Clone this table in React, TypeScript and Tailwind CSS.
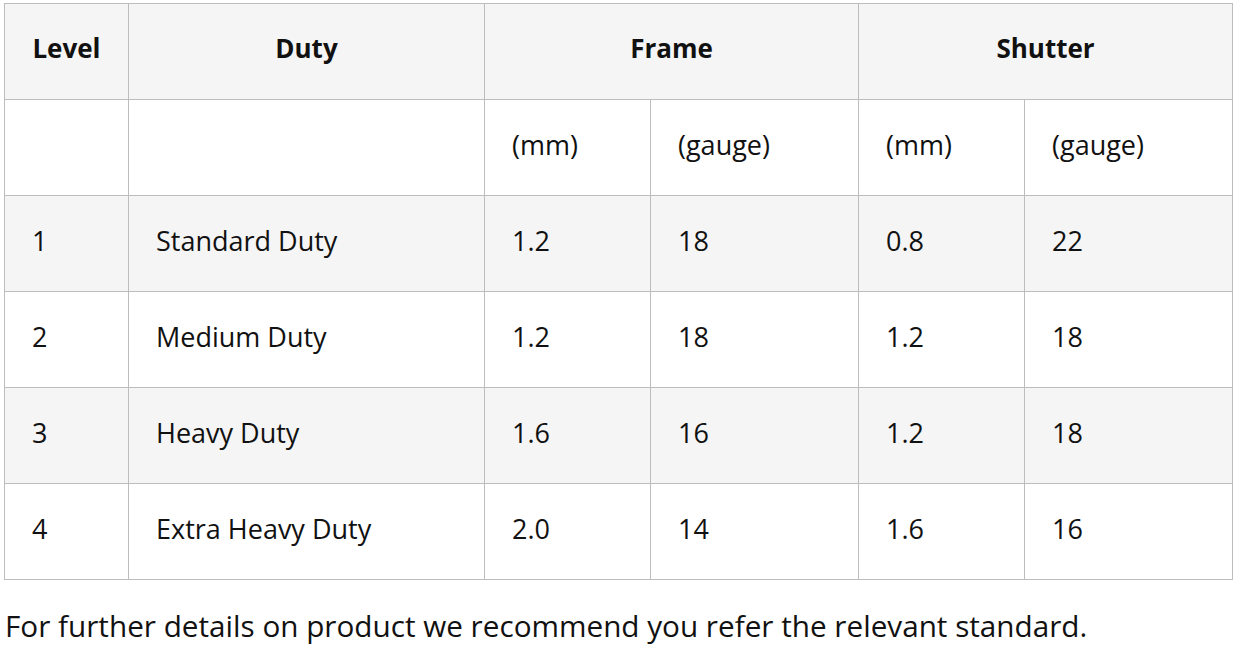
import React from 'react';

const rows = [
  ['1', 'Standard Duty', '1.2', '18', '0.8', '22'],
  ['2', 'Medium Duty', '1.2', '18', '1.2', '18'],
  ['3', 'Heavy Duty', '1.6', '16', '1.2', '18'],
  ['4', 'Extra Heavy Duty', '2.0', '14', '1.6', '16'],
];

const cell = 'border border-[#bdbdbd] px-[27px] pb-[6px] text-left align-middle';
const head = 'border border-[#bdbdbd] pb-[8px] font-bold text-center text-[26px]';

export default function App() {
  return (
    <div
      className="bg-white text-[#111111] pl-[4px] pt-[3px] min-h-[651px]"
      style={{ fontFamily: '"Open Sans", sans-serif' }}
    >
      <table className="table-fixed border-collapse w-[1229px] text-[27px] leading-none">
        <colgroup>
          <col className="w-[124px]" />
          <col className="w-[356px]" />
          <col className="w-[166px]" />
          <col className="w-[208px]" />
          <col className="w-[166px]" />
          <col className="w-[208px]" />
        </colgroup>
        <thead>
          <tr className="h-[96px] bg-[#f5f5f5]">
            <th className={head}>Level</th>
            <th className={head}>Duty</th>
            <th colSpan={2} className={head}>Frame</th>
            <th colSpan={2} className={head}>Shutter</th>
          </tr>
        </thead>
        <tbody>
          <tr className="h-[96px] bg-white">
            <td className={cell}></td>
            <td className={cell}></td>
            <td className={cell}>(mm)</td>
            <td className={cell}>(gauge)</td>
            <td className={cell}>(mm)</td>
            <td className={cell}>(gauge)</td>
          </tr>
          {rows.map((r, i) => (
            <tr key={i} className={i % 2 === 0 ? 'h-[96px] bg-[#f5f5f5]' : 'h-[96px] bg-white'}>
              {r.map((v, j) => (
                <td key={j} className={cell}>{v}</td>
              ))}
            </tr>
          ))}
        </tbody>
      </table>
      <p className="mt-[26px] text-[29.7px] leading-[40px] pl-[1px]">
        For further details on product we recommend you refer the relevant standard.
      </p>
    </div>
  );
}
